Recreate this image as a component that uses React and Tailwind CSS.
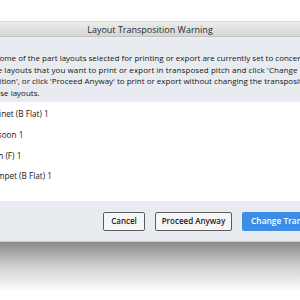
import React from 'react';

const instruments = ['Clarinet (B Flat) 1', 'Bassoon 1', 'Horn (F) 1', 'Trumpet (B Flat) 1'];

export default function App() {
  return (
    <div
      className="w-[300px] h-[300px] overflow-hidden bg-white pt-[21px]"
      style={{ fontFamily: '"Open Sans", "Liberation Sans", sans-serif' }}
    >
      <div className="w-[444px] ml-[-72px]">
        {/* title bar */}
        <div className="h-[16px] flex items-center justify-center bg-gradient-to-b from-[#ececec] to-[#d5d5d5] border-t border-[#d9d9d9] border-b border-b-[#c4c4c4]">
          <span className="text-[9px] leading-none text-[#2b2b2b]">Layout Transposition Warning</span>
        </div>

        {/* message */}
        <div className="bg-[#e8ebef] pt-[15px] pb-[4px] pl-[37px] text-[8px] leading-[11.5px] text-[#161616] whitespace-nowrap">
          <p className="indent-[30px]">
            Some of the part layouts selected for printing or export are currently set to concert pitch.
          </p>
          <p className="tracking-[0.08px]">
            Select the layouts that you want to print or export in transposed pitch and click 'Change
          </p>
          <p>Transposition', or click 'Proceed Anyway' to print or export without changing the transposition of</p>
          <p className="indent-[23px]">these layouts.</p>
        </div>

        {/* layout list */}
        <div className="bg-white h-[99px] pt-[2px] pl-[56px] text-[8.2px] text-[#161616]">
          {instruments.map((name) => (
            <div key={name} className="h-[20.7px] flex items-center">
              {name}
            </div>
          ))}
        </div>

        {/* buttons */}
        <div className="bg-[#e8ebef] h-[41px] border-b border-[#c9cdd2] flex items-center gap-[10px] pl-[175px]">
          <button className="h-[19px] w-[42px] rounded-[2px] border border-[#5c5c5c] bg-[#f6f6f6] text-[8px] font-semibold text-[#222]">
            Cancel
          </button>
          <button className="h-[19px] w-[77px] rounded-[2px] border border-[#5c5c5c] bg-[#f6f6f6] text-[8px] font-semibold text-[#222]">
            Proceed Anyway
          </button>
          <button className="h-[19px] px-[9px] rounded-[2px] bg-[#3b8de6] text-[8.4px] font-semibold text-white whitespace-nowrap">
            Change Transposition
          </button>
        </div>

        {/* drop shadow */}
        <div className="h-[50px] bg-gradient-to-b from-[#8a8a8a] via-[#d2d2d2] to-white" />
      </div>
    </div>
  );
}
